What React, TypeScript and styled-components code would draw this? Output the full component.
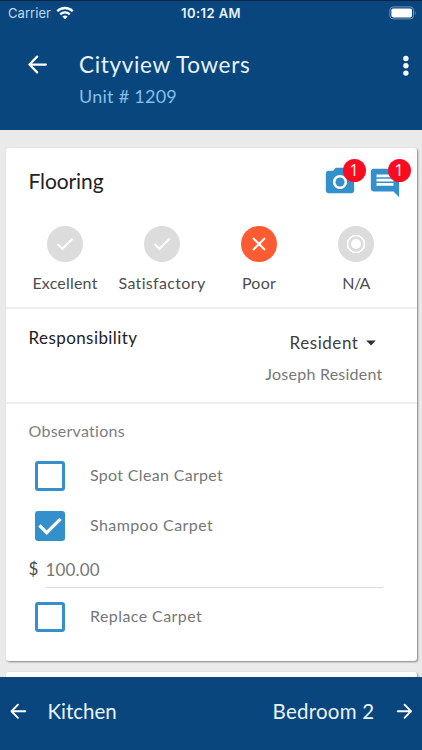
import React from "react";
import styled, { createGlobalStyle } from "styled-components";

const navy = "#08467d";
const blue = "#3390cb";

const GlobalStyle = createGlobalStyle`
  * { box-sizing: border-box; }
  body { margin: 0; background: #eaeaea; font-family: Lato, "Open Sans", sans-serif; }
`;

const Screen = styled.div`
  width: 422px;
  height: 750px;
  display: flex;
  flex-direction: column;
  overflow: hidden;
  background: #eaeaea;
`;

const Header = styled.header`
  height: 130px;
  flex: none;
  background: ${navy};
  color: #e9f3fb;
  border-top: 1px solid #0b2542;
`;

const StatusBar = styled.div`
  height: 24px;
  display: grid;
  grid-template-columns: 1fr 80px 1fr;
  align-items: center;
  padding: 0 5px 0 8px;
  font-family: Inter, Roboto, sans-serif;
  font-size: 13px;
`;

const Carrier = styled.div`
  display: flex;
  align-items: center;
  gap: 5px;
  color: #c5d7e8;
  letter-spacing: 0.05px;
`;

const Clock = styled.div`
  text-align: center;
  font-weight: 600;
  letter-spacing: 0.42px;
  margin-left: -3px;
  white-space: nowrap;
`;

const Battery = styled.svg`
  justify-self: end;
  margin-top: -1px;
`;

const AppBar = styled.div`
  display: flex;
  align-items: flex-start;
  padding: 25px 9px 0 24px;
`;

const BackButton = styled.div`
  width: 27px;
  flex: none;
  margin-top: 1px;
`;

const Titles = styled.div`
  flex: 1;
  margin-left: 28px;
`;

const Title = styled.h1`
  margin: 1px 0 0;
  font-size: 22.5px;
  font-weight: 400;
  line-height: 28px;
  letter-spacing: 0.65px;
`;

const Subtitle = styled.div`
  margin-top: 5px;
  font-size: 18px;
  line-height: 24px;
  letter-spacing: 0.26px;
  color: #86bfea;
`;

const MenuDots = styled.svg`
  margin-top: 5px;
  flex: none;
`;

const Content = styled.main`
  flex: 1;
  min-height: 0;
  overflow: hidden;
  padding: 17.5px 5.5px 0 6px;
`;

const Card = styled.section`
  background: #fff;
  border-radius: 3px;
  box-shadow: 1px 1px 2px rgba(0, 0, 0, 0.45);
  margin-bottom: 11px;
  min-height: 40px;
`;

const RatingSection = styled.div`
  height: 161.5px;
  border-bottom: 2px solid #eeeeee;
`;

const CardHead = styled.div`
  height: 78px;
  display: flex;
  justify-content: space-between;
  padding: 0 14.5px 0 22.5px;
`;

const CardTitle = styled.h2`
  margin: 20px 0 0;
  font-size: 21px;
  line-height: 26px;
  font-weight: 400;
  letter-spacing: -0.1px;
  color: #222;
`;

const Attachments = styled.div`
  display: flex;
  gap: 11px;
  margin: 17px 0 0;
`;

const Attachment = styled.div<{ $drop?: number }>`
  position: relative;
  width: 34px;
  height: 34px;
  svg { display: block; margin-top: ${(p) => p.$drop ?? 0}px; }
`;

const Badge = styled.span`
  position: absolute;
  left: 19.5px;
  top: -6px;
  width: 23px;
  height: 23px;
  border-radius: 50%;
  background: #fb0a20;
  color: #fff;
  font: 16px/23px "Open Sans", sans-serif;
  text-align: center;
`;

const Ratings = styled.div`
  display: grid;
  grid-template-columns: repeat(4, 97px);
  padding-left: 10.5px;
`;

const Rating = styled.div`
  display: flex;
  flex-direction: column;
  align-items: center;
`;

const RatingCircle = styled.div<{ $active?: boolean }>`
  width: 36px;
  height: 36px;
  border-radius: 50%;
  display: flex;
  align-items: center;
  justify-content: center;
  background: ${(p) => (p.$active ? "#fd5c33" : "#dcdcdc")};
`;

const RatingLabel = styled.div<{ $spacing: number }>`
  margin-top: 10px;
  font-size: 16px;
  line-height: 22px;
  letter-spacing: ${(p) => p.$spacing}px;
  color: #4d4d4d;
`;

const ResponsibilitySection = styled.div`
  height: 95px;
  display: flex;
  justify-content: space-between;
  padding: 17px 34px 0 22.5px;
  border-bottom: 2px solid #eeeeee;
`;

const FieldName = styled.div`
  font-size: 17px;
  line-height: 24px;
  letter-spacing: 0.42px;
  color: #222;
`;

const Assignee = styled.div`
  display: flex;
  flex-direction: column;
  align-items: flex-end;
`;

const Picker = styled.div`
  display: flex;
  align-items: center;
  gap: 7px;
  margin: 5px 7px 0 0;
  font-size: 17px;
  line-height: 24px;
  letter-spacing: 0.56px;
  color: #404040;
`;

const PersonName = styled.div`
  margin-top: 7px;
  font-size: 16px;
  line-height: 24px;
  letter-spacing: 0.24px;
  color: #777;
`;

const Observations = styled.div`
  height: 256.5px;
  padding: 15px 34px 0 22.5px;
`;

const Caption = styled.div`
  font-size: 16px;
  line-height: 24px;
  letter-spacing: 0.26px;
  color: #7d7d7d;
`;

const CheckRow = styled.div<{ $top: number }>`
  display: flex;
  align-items: center;
  height: 30px;
  margin: ${(p) => p.$top}px 0 0 6.5px;
`;

const CheckLabel = styled.div<{ $spacing: number }>`
  margin-left: 25px;
  padding-bottom: 2px;
  font-size: 16px;
  line-height: 24px;
  letter-spacing: ${(p) => p.$spacing}px;
  color: #777;
`;

const Box = styled.div<{ $checked?: boolean }>`
  width: 30px;
  height: 30px;
  border: 3px solid ${blue};
  border-radius: 3px;
  background: ${(p) => (p.$checked ? blue : "#fff")};
  display: flex;
  align-items: center;
  justify-content: center;
  svg { flex: none; }
`;

const AmountRow = styled.div`
  display: flex;
  margin-top: 16px;
  font-size: 17px;
  line-height: 24px;
`;

const Currency = styled.div`
  width: 17px;
  flex: none;
  color: #4a4a4a;
`;

const Amount = styled.div`
  flex: 1;
  height: 31px;
  padding-top: 1px;
  letter-spacing: 0.15px;
  color: #777;
  border-bottom: 1px solid #dcdcdc;
`;

const Footer = styled.footer`
  height: 73.5px;
  flex: none;
  display: flex;
  align-items: center;
  justify-content: space-between;
  padding: 0 6.5px 4px 7px;
  background: ${navy};
  color: #e9f3fb;
`;

const FooterLink = styled.div<{ $gap: number; $spacing: number }>`
  display: flex;
  align-items: center;
  gap: ${(p) => p.$gap}px;
  font-size: 20.5px;
  line-height: 26px;
  letter-spacing: ${(p) => p.$spacing}px;
`;

function Arrow({ size, right }: { size: number; right?: boolean }) {
  return (
    <svg width={size} height={size} viewBox="0 0 24 24" fill="none" stroke="#fff" strokeWidth="2" strokeLinecap="round" strokeLinejoin="round">
      <path d={right ? "M5 12H19M12.3 5L19.2 12L12.3 19" : "M19.5 12H5M11.7 5L4.8 12L11.7 19"} />
    </svg>
  );
}

const Tick = () => (
  <svg width="18" height="14" viewBox="0 0 18 14" fill="none" stroke="#fff" strokeWidth="2">
    <path d="M1.6 7L6.4 11.8L16.6 1.8" />
  </svg>
);

const Cross = () => (
  <svg width="14" height="14" viewBox="0 0 14 14" fill="none" stroke="#fff" strokeWidth="2">
    <path d="M1 1L13 13M13 1L1 13" />
  </svg>
);

const Ring = () => (
  <svg width="20" height="20" viewBox="0 0 20 20">
    <circle cx="10" cy="10" r="8.5" fill="none" stroke="#fff" strokeWidth="1.7" />
    <circle cx="10" cy="10" r="5" fill="#fff" />
  </svg>
);

const ratings = [
  { label: "Excellent", icon: <Tick />, spacing: 0.2 },
  { label: "Satisfactory", icon: <Tick />, spacing: 0.34 },
  { label: "Poor", icon: <Cross />, active: true, spacing: 0.22 },
  { label: "N/A", icon: <Ring />, spacing: -0.7 },
];

function CheckItem({ label, top, spacing, checked }: { label: string; top: number; spacing: number; checked?: boolean }) {
  return (
    <CheckRow $top={top}>
      <Box $checked={checked}>
        {checked && (
          <svg width="26" height="22" viewBox="0 0 26 22" fill="none" stroke="#fff" strokeWidth="3.3">
            <path d="M2.4 10.4L9.7 17.6L23.6 3.8" />
          </svg>
        )}
      </Box>
      <CheckLabel $spacing={spacing}>{label}</CheckLabel>
    </CheckRow>
  );
}

export default function App() {
  return (
    <Screen>
      <GlobalStyle />
      <Header>
        <StatusBar>
          <Carrier>
            Carrier
            <svg width="18" height="14" viewBox="0 0 18 14" fill="none" stroke="#fff" strokeWidth="2.3">
              <path d="M1.2 5.2C5.5 0.9 12.5 0.9 16.8 5.2" />
              <path d="M4.2 8.3C6.9 5.7 11.1 5.7 13.8 8.3" />
              <path d="M9 13.2L6.4 10.5C7.9 9.2 10.1 9.2 11.6 10.5Z" fill="#fff" stroke="none" />
            </svg>
          </Carrier>
          <Clock>10:12 AM</Clock>
          <Battery width="28" height="14" viewBox="0 0 28 14">
            <rect x="0.9" y="0.9" width="23.6" height="12" rx="3.2" fill="none" stroke="#7395b6" />
            <rect x="2.4" y="2.4" width="20.6" height="9" rx="1.8" fill="#fff" />
            <path d="M25.8 5V9C26.9 8.5 26.9 5.5 25.8 5Z" fill="#7395b6" />
          </Battery>
        </StatusBar>
        <AppBar>
          <BackButton>
            <Arrow size={27} />
          </BackButton>
          <Titles>
            <Title>Cityview Towers</Title>
            <Subtitle>Unit # 1209</Subtitle>
          </Titles>
          <MenuDots width="14" height="22" viewBox="0 0 14 22" fill="#fff">
            <circle cx="6.9" cy="3.5" r="2.7" />
            <circle cx="6.9" cy="10.8" r="2.7" />
            <circle cx="6.9" cy="18.1" r="2.7" />
          </MenuDots>
        </AppBar>
      </Header>

      <Content>
        <Card>
          <RatingSection>
            <CardHead>
              <CardTitle>Flooring</CardTitle>
              <Attachments>
                <Attachment>
                  <svg width="34" height="34" viewBox="0 0 24 24" fill={blue}>
                    <circle cx="12" cy="12" r="3.2" />
                    <path d="M9 2L7.17 4H4c-1.1 0-2 .9-2 2v12c0 1.1.9 2 2 2h16c1.1 0 2-.9 2-2V6c0-1.1-.9-2-2-2h-3.17L15 2H9zm3 15c-2.76 0-5-2.24-5-5s2.24-5 5-5 5 2.24 5 5-2.24 5-5 5z" />
                  </svg>
                  <Badge>1</Badge>
                </Attachment>
                <Attachment $drop={1}>
                  <svg width="34" height="34" viewBox="0 0 24 24" fill={blue}>
                    <path d="M21.99 4c0-1.1-.89-2-1.99-2H4c-1.1 0-2 .9-2 2v12c0 1.1.9 2 2 2h14l4 4-.01-18zM18 14H6v-2h12v2zm0-3H6V9h12v2zm0-3H6V6h12v2z" />
                  </svg>
                  <Badge>1</Badge>
                </Attachment>
              </Attachments>
            </CardHead>
            <Ratings>
              {ratings.map((r) => (
                <Rating key={r.label}>
                  <RatingCircle $active={r.active}>{r.icon}</RatingCircle>
                  <RatingLabel $spacing={r.spacing}>{r.label}</RatingLabel>
                </Rating>
              ))}
            </Ratings>
          </RatingSection>

          <ResponsibilitySection>
            <FieldName>Responsibility</FieldName>
            <Assignee>
              <Picker>
                Resident
                <svg width="10" height="6" viewBox="0 0 10 6" fill="#333">
                  <path d="M0.2 0.5H9.8L5 5.5Z" />
                </svg>
              </Picker>
              <PersonName>Joseph Resident</PersonName>
            </Assignee>
          </ResponsibilitySection>

          <Observations>
            <Caption>Observations</Caption>
            <CheckItem label="Spot Clean Carpet" top={18} spacing={0.32} />
            <CheckItem label="Shampoo Carpet" top={20} spacing={0.41} checked />
            <AmountRow>
              <Currency>$</Currency>
              <Amount>100.00</Amount>
            </AmountRow>
            <CheckItem label="Replace Carpet" top={14} spacing={0.42} />
          </Observations>
        </Card>
        <Card />
      </Content>

      <Footer>
        <FooterLink $gap={18} $spacing={0}>
          <Arrow size={22.5} />
          Kitchen
        </FooterLink>
        <FooterLink $gap={18.5} $spacing={0.25}>
          Bedroom 2
          <Arrow size={22.5} right />
        </FooterLink>
      </Footer>
    </Screen>
  );
}
